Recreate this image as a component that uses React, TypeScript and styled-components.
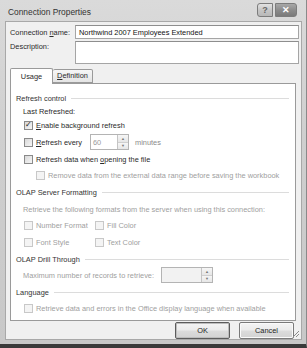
import React from "react";
import styled, { createGlobalStyle } from "styled-components";

const Global = createGlobalStyle`
  html, body {
    margin: 0;
    padding: 0;
    background: #ffffff;
  }
  * {
    box-sizing: border-box;
  }
`;

const Window = styled.div`
  width: 307px;
  height: 348px;
  display: flex;
  flex-direction: column;
  background: linear-gradient(180deg, #dadada 0%, #cfcfcf 40%, #c8c8c8 100%);
  border-bottom: 4px solid #3a3a3a;
  border-right: 1px solid #8a8a8a;
  font-family: "Liberation Sans", Arial, sans-serif;
  font-size: 7.4px;
  color: #2a2a2a;
`;

const TitleBar = styled.div`
  height: 21px;
  display: flex;
  align-items: center;
  padding: 0 9px 0 8px;
`;

const Title = styled.div`
  flex: 1;
  font-size: 8.4px;
  color: #333;
  padding-top: 3px;
`;

const CaptionButtons = styled.div`
  display: flex;
  align-self: flex-start;
  margin-top: 3px;
`;

const CaptionButton = styled.div<{ $close?: boolean }>`
  width: ${(p) => (p.$close ? "22px" : "16px")};
  height: 14px;
  display: flex;
  align-items: center;
  justify-content: center;
  border: 1px solid #7c7c7c;
  border-radius: ${(p) => (p.$close ? "0 3px 3px 0" : "3px 0 0 3px")};
  background: ${(p) =>
    p.$close
      ? "linear-gradient(180deg, #a8a8a8 0%, #8c8c8c 50%, #7a7a7a 100%)"
      : "linear-gradient(180deg, #e2e2e2 0%, #c6c6c6 50%, #b8b8b8 100%)"};
  color: ${(p) => (p.$close ? "#ffffff" : "#666")};
  font-size: 9px;
  font-weight: bold;
  margin-left: ${(p) => (p.$close ? "2px" : "0")};
`;

const Client = styled.div`
  flex: 1;
  margin: 0 4px 4px 5px;
  background: #f0f0f0;
  border: 1px solid #a8a8a8;
  padding: 3px 5px 0 4px;
  display: flex;
  flex-direction: column;
  position: relative;
`;

const FieldRow = styled.div<{ $h: number }>`
  display: flex;
  align-items: flex-start;
  height: ${(p) => p.$h}px;
`;

const FieldLabel = styled.div<{ $top: number }>`
  width: 65px;
  padding-top: ${(p) => p.$top}px;
`;

const TextBox = styled.div<{ $h: number }>`
  flex: 1;
  height: ${(p) => p.$h}px;
  margin-right: -3px;
  background: #fff;
  border: 1px solid #a5a5a5;
  border-top-color: #8e8e8e;
  padding: 2px 3px;
  color: #111;
`;

const Tabs = styled.div`
  display: flex;
  align-items: flex-end;
  height: 16px;
  margin-top: 3px;
`;

const Tab = styled.div<{ $active?: boolean }>`
  height: ${(p) => (p.$active ? "16px" : "14px")};
  width: ${(p) => (p.$active ? "43px" : "40px")};
  display: flex;
  align-items: center;
  justify-content: center;
  background: ${(p) =>
    p.$active ? "#ffffff" : "linear-gradient(180deg, #f6f6f6 0%, #e4e4e4 100%)"};
  border: 1px solid #9a9a9a;
  border-bottom: ${(p) => (p.$active ? "none" : "1px solid #9a9a9a")};
  border-left: ${(p) => (p.$active ? "1px solid #9a9a9a" : "none")};
  border-radius: 2px 2px 0 0;
  position: relative;
  z-index: ${(p) => (p.$active ? 1 : 0)};
  margin-bottom: ${(p) => (p.$active ? "-1px" : "0")};
  padding-bottom: 1px;
`;

const Panel = styled.div`
  height: 238px;
  width: 286px;
  background: #ffffff;
  border: 1px solid #9a9a9a;
  padding: 7px 6px 0 5px;
  display: flex;
  flex-direction: column;
`;

const GroupHeader = styled.div<{ $h: number }>`
  display: flex;
  align-items: center;
  height: ${(p) => p.$h}px;
  gap: 5px;
  color: #333;
  &::after {
    content: "";
    flex: 1;
    height: 1px;
    background: #dcdcdc;
  }
`;

const Row = styled.div<{ $h: number; $indent?: number; $disabled?: boolean }>`
  display: flex;
  align-items: center;
  height: ${(p) => p.$h}px;
  padding-left: ${(p) => p.$indent ?? 7}px;
  color: ${(p) => (p.$disabled ? "#a0a0a0" : "#2a2a2a")};
  white-space: nowrap;
`;

const Check = styled.div<{ $disabled?: boolean }>`
  width: 9px;
  height: 9px;
  margin-left: 1px;
  margin-right: 3px;
  flex-shrink: 0;
  border: 1px solid ${(p) => (p.$disabled ? "#c8c8c8" : "#8a8a8a")};
  background: ${(p) =>
    p.$disabled ? "#f4f4f4" : "linear-gradient(135deg, #d8d8d8 0%, #f6f6f6 100%)"};
  display: flex;
  align-items: center;
  justify-content: center;
  font-size: 8px;
  line-height: 1;
  color: #222;
`;

const CheckCell = styled.div<{ $w?: number }>`
  display: flex;
  align-items: center;
  width: ${(p) => (p.$w ? `${p.$w}px` : "auto")};
`;

const Spin = styled.div<{ $w: number; $disabled?: boolean }>`
  display: flex;
  height: 16px;
  width: ${(p) => p.$w}px;
  border: 1px solid #b4b4b4;
  background: ${(p) => (p.$disabled ? "#f2f2f2" : "#ffffff")};
`;

const SpinValue = styled.div`
  flex: 1;
  padding: 3px 2px;
  color: #9a9a9a;
`;

const SpinArrows = styled.div`
  width: 11px;
  display: flex;
  flex-direction: column;
  border-left: 1px solid #c4c4c4;
`;

const SpinArrow = styled.div`
  flex: 1;
  display: flex;
  align-items: center;
  justify-content: center;
  font-size: 4px;
  color: #777;
  background: linear-gradient(180deg, #f6f6f6 0%, #e6e6e6 100%);
  & + & {
    border-top: 1px solid #cfcfcf;
  }
`;

const Muted = styled.span`
  margin-left: 6px;
  color: #8a8a8a;
`;

const InlineLabel = styled.span<{ $w: number }>`
  width: ${(p) => p.$w}px;
`;

const Footer = styled.div`
  display: flex;
  justify-content: flex-end;
  gap: 9px;
  padding-top: 1px;
  padding-right: 2px;
`;

const Button = styled.div<{ $default?: boolean }>`
  width: 55px;
  height: 17px;
  display: flex;
  align-items: center;
  justify-content: center;
  border: 1px solid ${(p) => (p.$default ? "#5c5c5c" : "#7a7a7a")};
  border-radius: 2px;
  box-shadow: ${(p) => (p.$default ? "inset 0 0 0 1px #bdbdbd" : "inset 0 0 0 1px #fafafa")};
  background: linear-gradient(180deg, #f4f4f4 0%, #ebebeb 48%, #dcdcdc 52%, #d2d2d2 100%);
  color: #222;
`;

const Grip = styled.svg`
  position: absolute;
  right: 1px;
  bottom: 1px;
`;

function Spinner(props: { width: number; value?: string; disabled?: boolean }) {
  return (
    <Spin $w={props.width} $disabled={props.disabled}>
      <SpinValue>{props.value}</SpinValue>
      <SpinArrows>
        <SpinArrow>▲</SpinArrow>
        <SpinArrow>▼</SpinArrow>
      </SpinArrows>
    </Spin>
  );
}

export default function App() {
  return (
    <>
      <Global />
      <Window>
        <TitleBar>
          <Title>Connection Properties</Title>
          <CaptionButtons>
            <CaptionButton>?</CaptionButton>
            <CaptionButton $close>✕</CaptionButton>
          </CaptionButtons>
        </TitleBar>
        <Client>
          <FieldRow $h={16}>
            <FieldLabel $top={3}>
              Connection <u>n</u>ame:
            </FieldLabel>
            <TextBox $h={14}>Northwind 2007 Employees Extended</TextBox>
          </FieldRow>
          <FieldRow $h={23}>
            <FieldLabel $top={1}>Description:</FieldLabel>
            <TextBox $h={23} />
          </FieldRow>
          <Tabs>
            <Tab $active>Usage</Tab>
            <Tab>
              <span>
                <u>D</u>efinition
              </span>
            </Tab>
          </Tabs>
          <Panel>
            <GroupHeader $h={14}>Refresh control</GroupHeader>
            <Row $h={12}>Last Refreshed:</Row>
            <Row $h={16}>
              <Check>✓</Check>
              <span>
                <u>E</u>nable background refresh
              </span>
            </Row>
            <Row $h={18}>
              <CheckCell $w={67}>
                <Check />
                <span>
                  <u>R</u>efresh every
                </span>
              </CheckCell>
              <Spinner width={39} value="60" />
              <Muted>minutes</Muted>
            </Row>
            <Row $h={16}>
              <Check />
              <span>
                Refresh data when <u>o</u>pening the file
              </span>
            </Row>
            <Row $h={16} $indent={19} $disabled>
              <Check $disabled />
              Remove data from the external data range before saving the workbook
            </Row>
            <GroupHeader $h={18}>OLAP Server Formatting</GroupHeader>
            <Row $h={16} $disabled>
              Retrieve the following formats from the server when using this connection:
            </Row>
            <Row $h={16} $disabled>
              <CheckCell $w={71}>
                <Check $disabled />
                Number Format
              </CheckCell>
              <CheckCell>
                <Check $disabled />
                Fill Color
              </CheckCell>
            </Row>
            <Row $h={18} $disabled>
              <CheckCell $w={71}>
                <Check $disabled />
                Font Style
              </CheckCell>
              <CheckCell>
                <Check $disabled />
                Text Color
              </CheckCell>
            </Row>
            <GroupHeader $h={16}>OLAP Drill Through</GroupHeader>
            <Row $h={16} $disabled>
              <InlineLabel $w={138}>Maximum number of records to retrieve:</InlineLabel>
              <Spinner width={52} disabled />
            </Row>
            <GroupHeader $h={18}>Language</GroupHeader>
            <Row $h={14} $disabled>
              <Check $disabled />
              Retrieve data and errors in the Office display language when available
            </Row>
          </Panel>
          <Footer>
            <Button $default>OK</Button>
            <Button>Cancel</Button>
          </Footer>
          <Grip width="8" height="8" viewBox="0 0 8 8">
            <path d="M7 1 L1 7 M7 4 L4 7" stroke="#8a8a8a" strokeWidth="1" />
          </Grip>
        </Client>
      </Window>
    </>
  );
}
